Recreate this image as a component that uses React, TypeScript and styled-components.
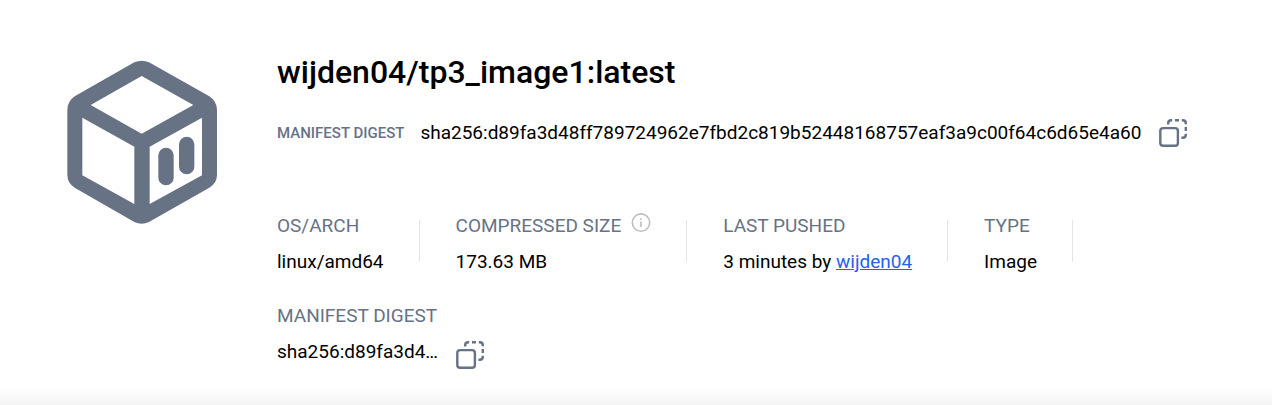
import React from "react";
import styled, { createGlobalStyle } from "styled-components";

const GlobalStyle = createGlobalStyle`
  *, *::before, *::after { box-sizing: border-box; }
  body {
    margin: 0;
    background: #ffffff;
    color: #000000;
    font-family: Roboto, "Liberation Sans", sans-serif;
    font-size: 19px;
    line-height: 26px;
  }
`;

const Page = styled.main`
  display: flex;
  flex-direction: column;
`;

const Header = styled.header`
  display: flex;
  align-items: flex-start;
  gap: 60px;
  padding: 52px 64px 14px 67px;
`;

const Logo = styled.svg`
  flex: none;
  width: 150px;
  height: 164px;
  margin-top: 8px;
  fill: #677285;
`;

const Details = styled.div`
  flex: 1;
  min-width: 0;
`;

const Title = styled.h1`
  margin: 0 0 25px;
  font-size: 32px;
  line-height: 40px;
  font-weight: 500;
`;

const DigestRow = styled.div`
  display: flex;
  align-items: center;
  gap: 16px;
  margin-bottom: 64px;
`;

const DigestLabel = styled.span`
  color: #677285;
  font-size: 15px;
  font-weight: 500;
`;

const CopyButton = styled.button`
  display: flex;
  flex: none;
  padding: 2px;
  border: 0;
  background: none;
  color: #677285;
  cursor: pointer;
`;

const Stats = styled.div`
  display: flex;
  flex-wrap: wrap;
  row-gap: 28px;
`;

const Stat = styled.div`
  display: flex;
  flex-direction: column;
  gap: 10px;
`;

const Divider = styled.span`
  width: 1px;
  height: 42px;
  margin: 7px 36px 0 35px;
  background: #e3e4e6;
`;

const StatLabel = styled.div`
  display: flex;
  align-items: flex-start;
  gap: 10px;
  height: 26px;
  color: #677285;
`;

const StatValue = styled.div`
  display: flex;
  align-items: flex-start;
  gap: 16px;
`;

const UserLink = styled.a`
  color: #1d63ed;
  text-decoration: underline;
`;

const BottomShade = styled.div`
  height: 20px;
  background: linear-gradient(#ffffff, #fbfbfb 50%, #f3f3f3);
`;

const ImageLogo = () => (
  <Logo viewBox="51 44 450 492" aria-hidden="true">
    <path
      fillRule="evenodd"
      d="M253 51Q275 41 297 51L478 153Q501 168 501 195V388Q501 413 478 427L297 530Q275 541 253 530L74 427Q52 413 52 388V195Q52 168 74 153Z
        M275 92L122 179L275 265L430 179Z
        M97 217V390L253 476V304Z
        M299 304V476L456 390V217Z"
    />
    <rect x="325" y="307" width="46" height="113" rx="23" />
    <rect x="387" y="274" width="46" height="113" rx="23" />
  </Logo>
);

const Copy = () => (
  <CopyButton type="button" aria-label="Copy digest">
    <svg width="28" height="28" viewBox="0 0 28 28" fill="none" stroke="currentColor" strokeWidth="2.4">
      <rect x="1.3" y="9.1" width="17.6" height="17.6" rx="2.8" />
      <path
        strokeWidth="2.4"
        d="M9.2 5.4V4.3Q9.2 1.3 12.2 1.3H13.2M16 1.3H20M22.8 1.3H23.8Q26.8 1.3 26.8 4.3V5.3M26.8 8.1V12M26.8 14.8V15.8Q26.8 18.8 23.8 18.8H22.4"
      />
    </svg>
  </CopyButton>
);

const Info = () => (
  <svg width="20" height="20" viewBox="0 0 20 20" fill="none" stroke="#bdbdbd" strokeWidth="1.6" role="img" aria-label="More information">
    <circle cx="10" cy="9.6" r="8.7" />
    <path d="M10 8.6V14M10 5.2V7" />
  </svg>
);

export default function App() {
  return (
    <>
      <GlobalStyle />
      <Page>
        <Header>
          <ImageLogo />
          <Details>
            <Title>wijden04/tp3_image1:latest</Title>
            <DigestRow>
              <DigestLabel>MANIFEST DIGEST</DigestLabel>
              <span>sha256:d89fa3d48ff789724962e7fbd2c819b52448168757eaf3a9c00f64c6d65e4a60</span>
              <Copy />
            </DigestRow>
            <Stats>
              <Stat>
                <StatLabel>OS/ARCH</StatLabel>
                <StatValue>linux/amd64</StatValue>
              </Stat>
              <Divider />
              <Stat>
                <StatLabel>
                  COMPRESSED SIZE
                  <Info />
                </StatLabel>
                <StatValue>173.63 MB</StatValue>
              </Stat>
              <Divider />
              <Stat>
                <StatLabel>LAST PUSHED</StatLabel>
                <StatValue>
                  <span>
                    3 minutes by <UserLink href="#wijden04">wijden04</UserLink>
                  </span>
                </StatValue>
              </Stat>
              <Divider />
              <Stat>
                <StatLabel>TYPE</StatLabel>
                <StatValue>Image</StatValue>
              </Stat>
              <Divider />
              <Stat>
                <StatLabel>MANIFEST DIGEST</StatLabel>
                <StatValue>
                  <span>sha256:d89fa3d4…</span>
                  <Copy />
                </StatValue>
              </Stat>
            </Stats>
          </Details>
        </Header>
        <BottomShade />
      </Page>
    </>
  );
}
